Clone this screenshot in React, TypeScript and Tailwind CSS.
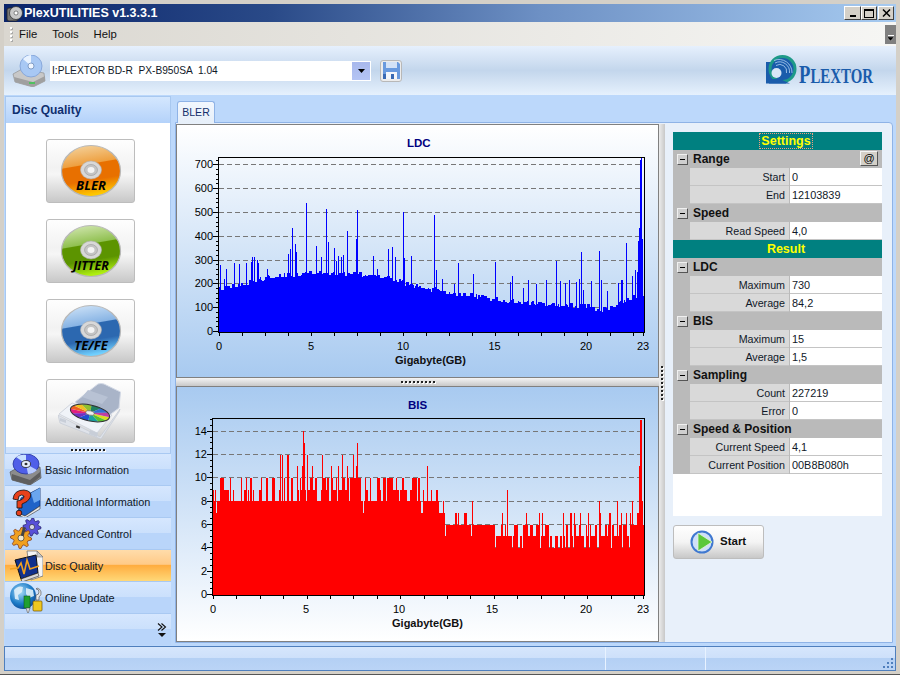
import React from "react";

const rng = (s: number) => () => {
  s = (s * 1664525 + 1013904223) >>> 0;
  return ((s >>> 8) & 0xffff) / 65535;
};

const lerp = (t: [number, number][], x: number) => {
  for (let i = 1; i < t.length; i++) {
    if (x <= t[i][0]) {
      const [a, b] = t[i - 1];
      const [c, d] = t[i];
      return b + ((d - b) * (x - a)) / (c - a);
    }
  }
  return t[t.length - 1][1];
};

const ldcSpikes: [number, number][] = (
  [[135,420],[148,462],[154,432],[178,414],[193,417],[213,414],[228,410],[230,396],[238,396],[246,405],[250,415],[275,432],[340,387],[344,372],[350,384],[352,309],[361,357],[364,381],[392,366],[394,234],[424,363],[439,396],[454,252],[460,351],[478,369],[484,408],[488,393],[499,396],[505,390],[517,318],[544,342],[547,255],[595,393],[607,432],[640,372],[652,366],[661,396],[685,261],[688,399],[709,393]] as [number, number][]
).map(([x, y]) => [175 + x / 3, 125 + y / 3] as [number, number]).concat(
  ([[43,270],[49,435],[67,462],[103,477],[115,414],[160,447],[226,411],[270,470],[275,453],[310,489],[325,465],[349,477],[378,465],[409,408],[421,468],[436,474],[448,465],[469,471],[478,462],[484,381],[490,495],[512,468],[538,378],[542,465],[562,498],[593,474],[604,465],[607,465],[619,354],[637,453],[646,435],[650,440],[655,348],[658,309],[661,105],[664,100],[667,342]] as [number, number][]).map(
    ([x, y]) => [420 + x / 3, 125 + y / 3] as [number, number]
  )
);

const ldcEnv: [number, number][] = [[219,180],[232,190],[256,218],[275,238],[300,238],[311,245],[350,245],[370,235],[390,222],[403,204],[420,186],[450,162],[494,136],[530,118],[570,112],[586,108],[600,88],[615,104],[630,146],[643,155]];

const ldcPath = (() => {
  const r = rng(11);
  const tops: number[] = [];
  let x = 219;
  while (x <= 643) {
    const run = 1 + Math.floor(r() * 3);
    const v = lerp(ldcEnv, x) + (r() - 0.5) * 22;
    for (let k = 0; k < run; k++) tops.push(331.5 - v * 0.238);
    x += run;
  }
  ldcSpikes.forEach(([sx, y]) => {
    const i = Math.round(sx) - 219;
    if (i >= 0 && i < tops.length) tops[i] = Math.min(tops[i], y);
  });
  return tops.slice(0, 425).map((t, i) => `M${219 + i + 0.5} ${t.toFixed(1)}V332`).join("");
})();

const bisSpikes: [number, number][] = [[175+383/3,14],[175+388/3,13],[175+547/3,13],[175+314/3,12],[175+320/3,12],[175+335/3,12],[175+338/3,12],[175+395/3,12],[175+440/3,12],[175+502/3,12],[175+534/3,12],[175+412/3,11],[175+365/3,11],[175+380/3,11],[175+490/3,11],[175+517/3,11],[175+544/3,11],[175+468/3,11],[420+22/3,11],[420+262/3,9],[420+10/3,9],[420+34/3,9],[420+538/3,8],[420+592/3,8],[420+637/3,8],[420+319/3,7],[420+367/3,7],[420+480/3,7],[420+505/3,7],[420+604/3,7],[420+618/3,7],[420+631/3,7],[420+655/3,7],[420+658/3,11],[420+661/3,15],[420+664/3,15],[420+667/3,8]];

const bisPath = (() => {
  const r = rng(47);
  const tops: number[] = [];
  let x = 213;
  while (x <= 643) {
    const run = r() < 0.72 ? 1 : 2;
    const n = r();
    let v: number;
    if (x < 300) v = n < 0.08 ? 7 : n < 0.62 ? 8 : n < 0.82 ? 9 : 10;
    else if (x < 420) v = n < 0.06 ? 7 : n < 0.42 ? 8 : n < 0.62 ? 9 : 10;
    else if (x < 445) v = n < 0.08 ? 6 : n < 0.42 ? 7 : n < 0.9 ? 8 : 9;
    else if (x < 495) v = n < 0.04 ? 5 : n < 0.78 ? 6 : n < 0.96 ? 7 : 8;
    else if (x < 635) v = n < 0.2 ? 4 : n < 0.62 ? 5 : n < 0.92 ? 6 : 7;
    else v = n < 0.4 ? 6 : 7;
    for (let k = 0; k < run; k++) tops.push(v);
    x += run;
  }
  bisSpikes.forEach(([sx, v]) => {
    const i = Math.round(sx) - 213;
    if (i >= 0 && i < tops.length) tops[i] = Math.max(tops[i], v);
  });
  return tops
    .slice(0, 431)
    .map((v, i) => `M${213 + i + 0.5} ${(594.5 - v * 11.66).toFixed(1)}V595`)
    .join("");
})();

const axisFont = '"Liberation Sans", Arial, sans-serif';

function Chart({
  title, titleX, titleY, left, right, top, bottom, yLabels, yZero, yUnit, minorEvery, xLabels, xTicks, path, color, labelY, xTitleY, xTitleX, ox, oy,
}: {
  title: string; titleX: number; titleY: number; left: number; right: number; top: number; bottom: number;
  yLabels: number[]; yZero: number; yUnit: number; minorEvery: number; xLabels: [string, number][]; xTicks: number[];
  path: string; color: string; labelY: number; xTitleY: number; xTitleX: number; ox: number; oy: number;
}) {
  const minors: number[] = [];
  for (let v = 0; yZero - v * yUnit >= top; v += minorEvery) minors.push(yZero - v * yUnit);
  return (
    <svg width="479" height={oy === 126 ? 250 : 252} className="block" shapeRendering="crispEdges">
      <g transform={`translate(${-ox} ${-oy})`} fontFamily={axisFont}>
        {yLabels.map((v) => v > 0 && (
          <line key={v} x1={left} x2={right} y1={Math.round(yZero - v * yUnit) + 0.5} y2={Math.round(yZero - v * yUnit) + 0.5} stroke="#777" strokeDasharray="5 3" />
        ))}
        <path d={path} stroke={color} strokeWidth="1" fill="none" />
        <rect x={left - 1} y={top} width={right - left + 2} height={bottom - top} fill="none" stroke="#000" strokeWidth="1" />
        <line x1={left - 0.5} x2={left - 0.5} y1={top} y2={bottom} stroke="#000" />
        <line x1={left - 1} x2={right + 1} y1={bottom + 0.5} y2={bottom + 0.5} stroke="#000" />
        {minors.map((y) => (
          <line key={y} x1={left - 3} x2={left} y1={Math.round(y) + 0.5} y2={Math.round(y) + 0.5} stroke="#000" />
        ))}
        {yLabels.map((v) => (
          <g key={v}>
            <line x1={left - 6} x2={left} y1={Math.round(yZero - v * yUnit) + 0.5} y2={Math.round(yZero - v * yUnit) + 0.5} stroke="#000" />
            <text x={left - 6} y={yZero - v * yUnit + 4} textAnchor="end" fontSize="11" fill="#000" shapeRendering="auto">{v}</text>
          </g>
        ))}
        {xTicks.map((x) => (
          <line key={x} x1={Math.round(x) + 0.5} x2={Math.round(x) + 0.5} y1={bottom} y2={bottom + 4} stroke="#000" />
        ))}
        {xLabels.map(([l, x]) => (
          <text key={l} x={x} y={labelY} textAnchor="middle" fontSize="11" fill="#000">{l}</text>
        ))}
        <text x={xTitleX} y={xTitleY} textAnchor="middle" fontSize="11.5" fontWeight="700" fill="#111" textLength="71" lengthAdjust="spacingAndGlyphs">Gigabyte(GB)</text>
        <text x={titleX} y={titleY} fontSize="11.5" fontWeight="700" fill="#000080">{title}</text>
      </g>
    </svg>
  );
}

function Disc({ a, b, c, d, label, size }: { a: string; b: string; c: string; d: string; label: string; size: number }) {
  const id = `disc-${label.replace("/", "")}`;
  return (
    <svg width="62" height="54" viewBox="0 0 62 54">
      <defs>
        <linearGradient id={id} x1="0.15" y1="0" x2="0.35" y2="1">
          <stop offset="0" stopColor={a} />
          <stop offset="0.4" stopColor={b} />
          <stop offset="0.42" stopColor={c} />
          <stop offset="0.72" stopColor={c} />
          <stop offset="1" stopColor={d} />
        </linearGradient>
      </defs>
      <ellipse cx="31" cy="27" rx="29.5" ry="25.5" fill={`url(#${id})`} stroke="#b8b8b8" strokeWidth="1.2" />
      <ellipse cx="31" cy="26" rx="10.5" ry="9" fill="#d8d8d8" stroke="#b0b0b0" strokeWidth="0.6" />
      <ellipse cx="31" cy="26" rx="6.5" ry="5.5" fill="#c4c4c4" stroke="#9a9a9a" strokeWidth="0.6" />
      <ellipse cx="31" cy="26" rx="3.5" ry="3" fill="#f4f4f4" />
      <text x="31" y="46" textAnchor="middle" fontFamily={'"Open Sans", sans-serif'} fontStyle="italic" fontWeight="700" fontSize={size} fill="#000">{label}</text>
    </svg>
  );
}

function DriveOpen() {
  const colors = ["#d8e020", "#58c030", "#18a0a0", "#2050d0", "#7030c0", "#e02080", "#f06020", "#f0c020", "#90c030", "#208060", "#3070d0", "#c040a0"];
  const cx = 32, cy = 31, rx = 20, ry = 8;
  return (
    <svg width="66" height="58" viewBox="0 0 66 58">
      <path d="M17 20 L40 2 Q43 1 46 2 L62.5 10 L61 26 L42 40 Z" fill="#a9b4c8" stroke="#d4dae6" />
      <path d="M30 8 L50 15 L44 22 L24 15 Z" fill="#b8c2d4" />
      <path d="M1 32 L14 21 L54 33 L39 51 Z" fill="#f0f3f8" stroke="#d0d5de" />
      <g transform={`rotate(12 ${cx} ${cy})`}>
        {colors.map((c, i) => {
          const a0 = (i / colors.length) * Math.PI * 2;
          const a1 = ((i + 1) / colors.length) * Math.PI * 2;
          return (
            <path key={i} d={`M${cx} ${cy}L${cx + rx * Math.cos(a0)} ${cy + ry * Math.sin(a0)}A${rx} ${ry} 0 0 1 ${cx + rx * Math.cos(a1)} ${cy + ry * Math.sin(a1)}Z`} fill={c} />
          );
        })}
        <ellipse cx={cx} cy={cy} rx={rx} ry={ry} fill="none" stroke="#333" strokeWidth="1" />
        <ellipse cx={cx} cy={cy} rx="4.5" ry="2.2" fill="#eee" stroke="#555" strokeWidth="0.6" />
      </g>
      <path d="M0 33 L42 55 L62 27 L61 30 L43 57 L2 41 Z" fill="#dfe3ea" stroke="#c4cad4" strokeWidth="0.7" />
      <path d="M2 36 L8 38 L8 41 L2 39 Z M32 48 L40 51 L39 55 L31 52 Z" fill="#c8ced8" />
      <rect x="18" y="44" width="4" height="2" fill="#333" transform="rotate(22 20 45)" />
    </svg>
  );
}

const gear = (cx: number, cy: number, R: number, r: number, n: number) => {
  const p: string[] = [];
  for (let i = 0; i < n * 4; i++) {
    const a = (i / (n * 4)) * Math.PI * 2;
    const q = i % 4 < 2 ? R : r;
    p.push(`${(cx + q * Math.cos(a)).toFixed(1)},${(cy + q * Math.sin(a)).toFixed(1)}`);
  }
  return p.join(" ");
};

function IconBasic() {
  return (
    <svg width="34" height="32" viewBox="0 0 34 32">
      <path d="M1 18 L10 13 L31 13 L32 24 L21 31 L3 26 Z" fill="#8c8c8c" stroke="#555" strokeWidth="0.7" />
      <path d="M3 20 L21 26 L31 18 L31 23 L21 31 L3 26 Z" fill="#5e5e5e" />
      <ellipse cx="17" cy="10" rx="13" ry="10" fill="#4f5fe8" stroke="#2434a0" strokeWidth="0.8" />
      <path d="M17 10 L7 3 Q12 0 17 1 Z" fill="#c8e0ff" />
      <path d="M17 10 L28 16 Q24 20 19 20 Z" fill="#b8ccff" />
      <ellipse cx="17" cy="10" rx="4.5" ry="3.5" fill="#e8f0ff" stroke="#222" strokeWidth="0.8" />
      <ellipse cx="17" cy="10" rx="1.5" ry="1.2" fill="#333" />
    </svg>
  );
}

function IconAdditional() {
  return (
    <svg width="34" height="32" viewBox="0 0 34 32">
      <path d="M12 12 L31 2 L31 20 L16 30 L9 27 Z" fill="#1f63c8" stroke="#0d2f70" strokeWidth="0.8" />
      <path d="M22 7 L31 2 L31 14 L25 17 Z" fill="#6aa6ee" />
      <path d="M9 27 L16 30 L31 20 L31 23 L16 32 L8 29 Z" fill="#e8e8e8" stroke="#333" strokeWidth="0.6" />
      <path d="M4 13 Q5 4 15 4 Q24 5 21 12 Q19 16 13 18 L13 22 L8 22 L8 15 Q15 14 15 10 Q13 8 10 10 L9 14 Z" fill="#e8411c" stroke="#111" strokeWidth="0.8" />
      <circle cx="10" cy="27" r="2.8" fill="#e8411c" stroke="#111" strokeWidth="0.8" />
    </svg>
  );
}

function IconAdvanced() {
  return (
    <svg width="34" height="32" viewBox="0 0 34 32">
      <polygon points={gear(23, 9, 9, 6.5, 8)} fill="#5850d8" stroke="#1c1860" strokeWidth="0.7" />
      <circle cx="23" cy="9" r="2.6" fill="#d8d8e8" stroke="#222" strokeWidth="0.6" />
      <polygon points={gear(12, 20, 10.5, 7.5, 8)} fill="#f0a020" stroke="#803010" strokeWidth="0.7" />
      <circle cx="12" cy="20" r="3" fill="#f0e8d0" stroke="#222" strokeWidth="0.6" />
      <rect x="13" y="9" width="3" height="9" fill="#444" transform="rotate(15 14 13)" />
    </svg>
  );
}

function IconQuality() {
  return (
    <svg width="34" height="32" viewBox="0 0 34 32">
      <path d="M18 1 L28 1 L34 7 L34 26 L22 30 Z" fill="#f4f4f4" stroke="#666" strokeWidth="0.7" />
      <path d="M28 1 L28 7 L34 7 Z" fill="#c8c8c8" stroke="#666" strokeWidth="0.5" />
      <path d="M6 10 L27 5 L29 23 L12 29 Z" fill="#10308c" stroke="#111" strokeWidth="1" />
      <path d="M12 29 L29 23 L30 26 L13 32 Z" fill="#d8d8d8" stroke="#222" strokeWidth="0.6" />
      <path d="M1 19 L9 18 L12 13 L15 24 L18 10 L21 19 L30 16" fill="none" stroke="#f0a020" strokeWidth="1.6" />
    </svg>
  );
}

function IconOnline() {
  return (
    <svg width="34" height="32" viewBox="0 0 34 32">
      <defs>
        <radialGradient id="globe" cx="0.4" cy="0.35" r="0.75">
          <stop offset="0" stopColor="#a8dcf8" />
          <stop offset="0.6" stopColor="#1c7cc8" />
          <stop offset="1" stopColor="#0c3c88" />
        </radialGradient>
      </defs>
      <circle cx="14" cy="14" r="13" fill="url(#globe)" />
      <path d="M5 8 Q9 3 14 5 L13 10 L9 13 L10 18 L6 17 Z M17 6 L24 8 L25 14 L20 16 L17 12 Z" fill="#dff0fa" opacity="0.9" />
      <rect x="15" y="14" width="6" height="12" fill="#20a030" stroke="#0b5015" strokeWidth="0.5" />
      <path d="M28 6 A5 5 0 0 1 30 15 L30 18 L27 18 L27 13 A3 3 0 0 0 27 7 Z" fill="#e8e8e8" stroke="#444" strokeWidth="0.6" />
      <rect x="24" y="19" width="9" height="10" rx="1" fill="#f0c820" stroke="#705000" strokeWidth="0.7" />
      <path d="M17 26 L19 32 L21 26 Z" fill="#ddd" stroke="#444" strokeWidth="0.5" />
    </svg>
  );
}

const navBg = "bg-[linear-gradient(#d6e7fe,#cbe0fc_48%,#b9d5fa_50%,#b9d5fa)]";

function NavItem({ label, icon, active }: { label: string; icon: React.ReactNode; active?: boolean }) {
  return (
    <div className={`h-8 flex items-center pl-[4px] border-t border-[#a9c9f2] ${active ? "bg-[linear-gradient(#ffdcaa,#ffca88_46%,#ffad40_50%,#ffd878)]" : navBg}`}>
      <span className="w-[36px] shrink-0 flex">{icon}</span>
      <span className="pt-[2px] text-[10.9px] text-[#101828]">{label}</span>
    </div>
  );
}

function Section({ title, at }: { title: string; at?: boolean }) {
  return (
    <div className="h-[18px] flex items-center bg-[#bababa] relative">
      <span className="w-[11px] h-[11px] ml-[4px] border border-[#f0f0f0] border-r-[#555] border-b-[#555] bg-[#cfcfcf] flex items-center justify-center">
        <span className="w-[5px] h-px bg-black" />
      </span>
      <span className="ml-[5px] text-[12px] font-bold text-[#111]">{title}</span>
      {at && (
        <span className="absolute right-[4px] top-[1px] w-[18px] h-[15px] bg-[#d4d0c8] border border-[#f4f4f4] border-r-[#555] border-b-[#555] text-[11px] leading-[12px] text-center text-black">@</span>
      )}
    </div>
  );
}

function Row({ label, value }: { label: string; value: string }) {
  return (
    <div className="h-[18px] flex bg-[#bababa]">
      <span className="w-[17px] shrink-0" />
      <span className="w-[99px] h-[18px] shrink-0 bg-[#d9d9d9] border-b border-[#c4c4c4] text-right pr-[4px] text-[10.7px] leading-[19px] text-[#101828]">{label}</span>
      <span className="w-px shrink-0 bg-[#bababa]" />
      <span className="flex-1 h-[18px] bg-white border-b border-[#c4c4c4] pl-[2px] text-[10.9px] leading-[19px] text-[#101828]">{value}</span>
    </div>
  );
}

function Head({ title, focus }: { title: string; focus?: boolean }) {
  return (
    <div className="h-[18px] bg-[#008080] flex items-center justify-center pl-[17px]">
      <span className={`text-[12.5px] font-bold text-[#ffff00] leading-[14px] px-px ${focus ? "outline-1 outline-dotted outline-[#f0a080]" : ""}`}>{title}</span>
    </div>
  );
}

const Dots = ({ vertical }: { vertical?: boolean }) => (
  <span className={`flex ${vertical ? "flex-col gap-[2px]" : "gap-[2px]"}`}>
    {Array.from({ length: 9 }).map((_, i) => (
      <span key={i} className="w-[2px] h-[2px] bg-[#222] shadow-[1px_1px_0_#fff]" />
    ))}
  </span>
);

const DiscButton = ({ children }: { children: React.ReactNode }) => (
  <div className="w-[89px] h-[64px] ml-[40px] rounded-[3px] border border-[#bdbdbd] bg-[linear-gradient(#fefefe,#f2f2f2_45%,#f6f6f6_55%,#c8c8c8)] flex items-center justify-center shrink-0">
    {children}
  </div>
);

const xt = (start: number, step: number, n: number) => Array.from({ length: n }, (_, i) => start + i * step);

export default function App() {
  return (
    <div className="w-[900px] h-[675px] overflow-hidden bg-[#d4d0c8] flex flex-col pt-[4px] pl-[4px] pr-[4px] font-['Liberation_Sans',Arial,sans-serif]">
      {/* title bar */}
      <div className="h-[18px] shrink-0 flex items-center bg-[linear-gradient(90deg,#0a246a,#2a4a88_30%,#6d90c4_60%,#a6caf0)]">
        <svg width="17" height="17" viewBox="0 0 17 17" className="ml-[2px]">
          <rect x="1" y="3" width="11" height="13" rx="2" fill="#777" stroke="#222" strokeWidth="0.8" />
          <circle cx="10" cy="8" r="6.5" fill="#c8c8c8" stroke="#333" strokeWidth="0.8" />
          <circle cx="10" cy="8" r="2" fill="#fff" stroke="#444" strokeWidth="0.6" />
        </svg>
        <span className="ml-px text-[12.5px] font-bold text-white">PlexUTILITIES v1.3.3.1</span>
        <span className="ml-auto flex items-center pr-[2px]">
          <span className="w-[17px] h-[14px] bg-[#d4d0c8] border border-[#fff] border-r-[#404040] border-b-[#404040] flex items-end justify-center pb-[2px]"><span className="w-[6px] h-[2px] bg-black" /></span>
          <span className="w-[16px] h-[14px] bg-[#d4d0c8] border border-[#fff] border-r-[#404040] border-b-[#404040] flex items-center justify-center"><span className="w-[10px] h-[9px] border border-black border-t-2" /></span>
          <span className="w-[16px] h-[14px] ml-px bg-[#d4d0c8] border border-[#fff] border-r-[#404040] border-b-[#404040] flex items-center justify-center">
            <svg width="9" height="8" viewBox="0 0 9 8"><path d="M1 0.5L8 7.5M8 0.5L1 7.5" stroke="#000" strokeWidth="1.5" /></svg>
          </span>
        </span>
      </div>
      {/* menu */}
      <div className="h-[24px] shrink-0 flex items-center bg-[linear-gradient(90deg,#dad7d0,#f6f6f4)] relative">
        <span className="ml-[6px] flex flex-col gap-[2px]">
          {[0, 1, 2, 3].map((i) => <span key={i} className="w-[2px] h-[2px] bg-white shadow-[1px_1px_0_#aaa]" />)}
        </span>
        <span className="ml-[7px] text-[11.3px] text-[#111]">File</span>
        <span className="ml-[15px] text-[11.3px] text-[#111]">Tools</span>
        <span className="ml-[15px] text-[11.3px] text-[#111]">Help</span>
        <span className="ml-auto mr-0 w-[11px] h-[19px] bg-[#808080] flex flex-col items-center justify-end pb-[3px] gap-px">
          <span className="w-[6px] h-px bg-white" />
          <svg width="7" height="4" viewBox="0 0 7 4"><path d="M0 0H7L3.5 4Z" fill="#000" stroke="#fff" strokeWidth="0.3" /></svg>
        </span>
      </div>
      {/* toolbar */}
      <div className="h-[49px] shrink-0 flex items-center bg-[linear-gradient(#e6f0fd,#c3d6ec_50%,#e6f1fd)] relative">
        <svg width="34" height="32" viewBox="0 0 34 32" className="ml-[8px]">
          <path d="M1 19 L10 14 L32 18 L33 26 L21 32 L3 27 Z" fill="#c8c8c8" stroke="#888" strokeWidth="0.6" />
          <path d="M2 22 L21 27 L33 21 L33 26 L21 32 L3 27 Z" fill="#a0a0a0" />
          <rect x="17" y="27" width="6" height="2" fill="#50c060" />
          <ellipse cx="19" cy="11" rx="11" ry="11" fill="#a8c8f4" stroke="#7e9ed4" strokeWidth="0.8" />
          <path d="M19 11 L11 4 Q15 0 19 0 Z" fill="#e8f2ff" />
          <ellipse cx="19" cy="11" rx="3" ry="3" fill="#f0f6ff" stroke="#6080b0" strokeWidth="0.7" />
        </svg>
        <div className="ml-[4px] w-[321px] h-[20px] bg-white flex items-center">
          <span className="pl-[2px] text-[10.2px] text-[#101828] whitespace-pre">I:PLEXTOR BD-R  PX-B950SA  1.04</span>
          <span className="ml-auto mr-px w-[18px] h-[18px] bg-[linear-gradient(#a8b8ec,#b4c4f4)] flex items-center justify-center">
            <svg width="7" height="4" viewBox="0 0 7 4"><path d="M0 0H7L3.5 4Z" fill="#000" /></svg>
          </span>
        </div>
        <span className="ml-[9px] w-[22px] h-[22px] rounded-[3px] border border-[#b8b8b8] bg-[#ececec] flex items-center justify-center">
          <svg width="17" height="17" viewBox="0 0 17 17">
            <path d="M0 0H15L17 2V17H0Z" fill="#6a9ade" />
            <rect x="3" y="0" width="11" height="6" fill="#d4e2f6" />
            <rect x="3" y="10" width="11" height="7" fill="#f4f6fa" />
            <rect x="0" y="12" width="3" height="5" fill="#3a6ab4" />
            <rect x="8" y="12" width="3" height="5" fill="#3a6ab4" />
          </svg>
        </span>
        <svg width="112" height="30" viewBox="0 0 112 30" className="ml-auto mr-[18px] overflow-visible">
          <rect x="0" y="6" width="20" height="21.5" fill="#1a5cab" />
          <circle cx="16.5" cy="13" r="12.5" fill="#1a5cab" stroke="#1e9a88" strokeWidth="3" />
          <path d="M8 4.5 A 13 13 0 0 1 26 17 M9 7 A 10 10 0 0 1 23.5 17 M10 9.5 A 7 7 0 0 1 20.5 17" fill="none" stroke="#a4c6ec" strokeWidth="0.9" />
          <circle cx="10.5" cy="17" r="5" fill="#d8e6f6" />
          <path d="M3 23 L14 23 L24 27.5 L3 27.5 Z" fill="#1a5cab" />
          <text x="33" y="26.5" fontFamily={'"Liberation Serif", serif'} fill="#1a5cab" fontWeight="700" textLength="74" lengthAdjust="spacingAndGlyphs">
            <tspan fontSize="25">P</tspan><tspan fontSize="20">LEXTOR</tspan>
          </text>
        </svg>
      </div>
      {/* body */}
      <div className="h-[551px] shrink-0 flex bg-[#bcd8fb]">
        {/* sidebar */}
        <div className="w-[166px] ml-px mt-px shrink-0 flex flex-col">
          <div className="h-[27px] shrink-0 flex items-center pl-[6px] border border-b-0 border-[#a8c8f0] bg-[linear-gradient(#d4e7fe,#b4d2fa)]">
            <span className="text-[12px] font-bold text-[#0f2f6f]">Disc Quality</span>
          </div>
          <div className="h-[324px] shrink-0 bg-white border-x border-[#a8c8f0] flex flex-col gap-4 pt-4">
            <DiscButton><Disc a="#f4d4a0" b="#eea040" c="#e87000" d="#ffc800" label="BLER" size={13} /></DiscButton>
            <DiscButton><Disc a="#d4e8b4" b="#90c050" c="#5c9400" d="#b0f010" label="JITTER" size={12.5} /></DiscButton>
            <DiscButton><Disc a="#d0e4f8" b="#88b4e4" c="#2c68b0" d="#70d0ff" label="TE/FE" size={13} /></DiscButton>
            <DiscButton><DriveOpen /></DiscButton>
          </div>
          <div className="h-[6px] shrink-0 bg-[#cfe2fc] flex items-center justify-center border-x border-[#a8c8f0]"><Dots /></div>
          <NavItem label="Basic Information" icon={<IconBasic />} />
          <NavItem label="Additional Information" icon={<IconAdditional />} />
          <NavItem label="Advanced Control" icon={<IconAdvanced />} />
          <NavItem label="Disc Quality" icon={<IconQuality />} active />
          <NavItem label="Online Update" icon={<IconOnline />} />
          <div className={`h-8 border-t border-[#a9c9f2] flex justify-end items-end pb-[7px] pr-[4px] ${navBg}`}>
            <svg width="10" height="15" viewBox="0 0 10 15">
              <path d="M1 0.5L5 4L1 7.5M4.5 0.5L8.5 4L4.5 7.5" fill="none" stroke="#111" strokeWidth="1.1" />
              <path d="M1 10H9L5 14Z" fill="#111" />
            </svg>
          </div>
        </div>
        {/* content */}
        <div className="w-[718px] ml-[4px] flex flex-col">
          <div className="h-[27px] shrink-0 flex items-end pl-[2px]">
            <div className="w-[38px] h-[22px] -mb-px z-10 rounded-t-[3px] border border-b-0 border-[#8fb3e6] bg-[linear-gradient(#f2f7fe,#e6eff9)] text-[10.5px] text-[#15306c] flex items-center justify-center">BLER</div>
          </div>
          <div className="h-[521px] shrink-0 border border-[#8fb3e6] rounded-tr-[4px] bg-[#e8f0fa] pt-px flex">
            <div className="w-[483px] shrink-0 flex flex-col">
              <div className="h-[254px] shrink-0 border border-[#808080] p-px bg-[linear-gradient(#ffffff,#a8caf0)]">
                <Chart title="LDC" titleX={407} titleY={147} left={219} right={643} top={157} bottom={332}
                  yLabels={[0,100,200,300,400,500,600,700]} yZero={331} yUnit={0.238} minorEvery={20}
                  xLabels={[["0",219],["5",311],["10",403],["15",494.5],["20",586],["23",643]]}
                  xTicks={[...xt(219,23,19),643]} path={ldcPath} color="#0000ff" labelY={350} xTitleY={364} xTitleX={430.5} ox={178} oy={126} />
              </div>
              <div className="h-[8px] shrink-0 bg-[linear-gradient(#f4f4f4,#c8c8c8)] flex items-center justify-center"><Dots /></div>
              <div className="h-[256px] shrink-0 border border-[#808080] p-px bg-[linear-gradient(#a8caf0,#ffffff)]">
                <Chart title="BIS" titleX={408} titleY={409} left={213} right={643} top={418} bottom={595}
                  yLabels={[0,2,4,6,8,10,12,14]} yZero={594} yUnit={11.66} minorEvery={0.5}
                  xLabels={[["0",213],["5",306],["10",399],["15",492],["20",586],["23",643]]}
                  xTicks={[...xt(213,23.4,19),643]} path={bisPath} color="#ff0000" labelY={613} xTitleY={627} xTitleX={427.5} ox={178} oy={388} />
              </div>
            </div>
            <div className="w-[6px] shrink-0 bg-[linear-gradient(90deg,#ececec,#c8c8c8)] flex items-center justify-center"><Dots vertical /></div>
            <div className="flex-1 pl-[8px] pt-[8px]">
              <div className="w-[209px] h-[384px] bg-white">
                <Head title="Settings" focus />
                <Section title="Range" at />
                <Row label="Start" value="0" />
                <Row label="End" value="12103839" />
                <Section title="Speed" />
                <Row label="Read Speed" value="4,0" />
                <Head title="Result" />
                <Section title="LDC" />
                <Row label="Maximum" value="730" />
                <Row label="Average" value="84,2" />
                <Section title="BIS" />
                <Row label="Maximum" value="15" />
                <Row label="Average" value="1,5" />
                <Section title="Sampling" />
                <Row label="Count" value="227219" />
                <Row label="Error" value="0" />
                <Section title="Speed & Position" />
                <Row label="Current Speed" value="4,1" />
                <Row label="Current Position" value="00B8B080h" />
              </div>
              <div className="mt-[9px] w-[91px] h-[34px] rounded-[3px] border border-[#bdbdbd] bg-[linear-gradient(#fefefe,#f4f4f4_50%,#c8c8c8)] flex items-center pl-[16px]">
                <svg width="24" height="24" viewBox="0 0 24 24">
                  <circle cx="12" cy="12" r="10.5" fill="#cfe0f8" stroke="#3f78d0" strokeWidth="2" />
                  <path d="M8 3 L22 12 L8 21 Z" fill="#5cc83c" stroke="#e4f4d8" strokeWidth="0.8" />
                </svg>
                <span className="ml-[6px] text-[11.5px] font-bold text-[#111]">Start</span>
              </div>
            </div>
          </div>
        </div>
      </div>
      {/* status bar */}
      <div className="h-[25px] shrink-0 border border-[#4f7fbd] bg-[linear-gradient(#d6e6fc,#cde0fa_48%,#b4d0f4_50%,#bad4f6)] flex relative">
        <span className="w-[601px] border-r border-[#e8f2ff]" />
        <span className="w-[100px] border-r border-[#e8f2ff]" />
        <span className="ml-auto mr-px mb-px self-end">
          <svg width="12" height="12" viewBox="0 0 12 12" fill="#4f7fbd">
            <rect x="9" y="1" width="2" height="2" /><rect x="5" y="5" width="2" height="2" /><rect x="9" y="5" width="2" height="2" />
            <rect x="1" y="9" width="2" height="2" /><rect x="5" y="9" width="2" height="2" /><rect x="9" y="9" width="2" height="2" />
          </svg>
        </span>
      </div>
      <div className="h-[4px] shrink-0 -mx-[4px] bg-[#d4d0c8] border-b border-[#555]" />
    </div>
  );
}
